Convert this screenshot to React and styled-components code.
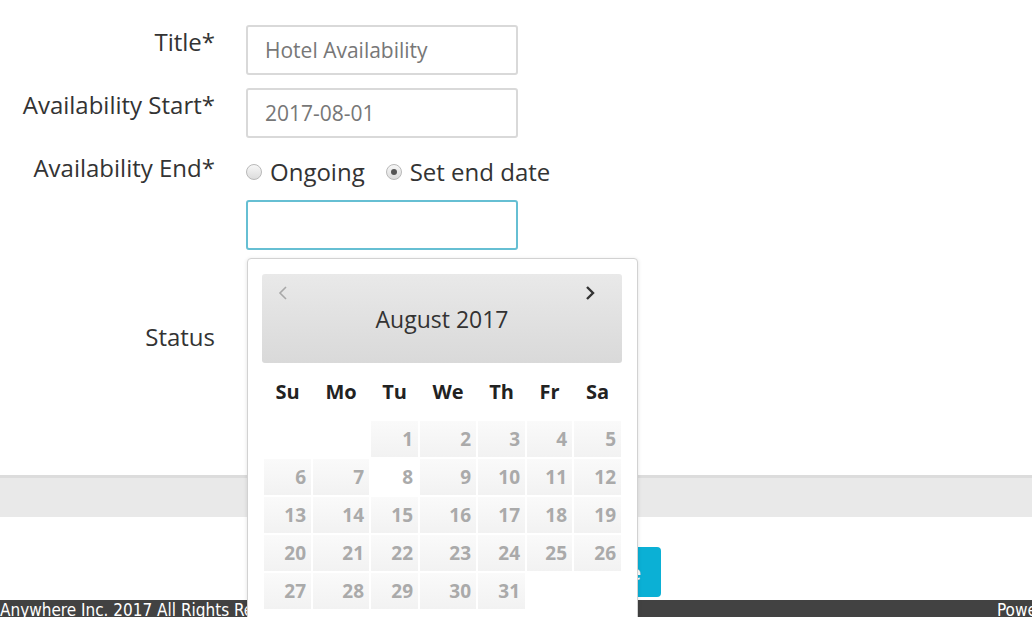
import React from 'react';
import styled, { createGlobalStyle } from 'styled-components';

const GlobalStyle = createGlobalStyle`
  html, body {
    margin: 0;
    padding: 0;
    background: #fff;
    overflow: hidden;
  }
  body {
    font-family: "Open Sans", "DejaVu Sans", sans-serif;
    color: #333;
  }
  * { box-sizing: border-box; }
`;

const Page = styled.div`
  width: 1032px;
  height: 617px;
  display: flex;
  flex-direction: column;
  overflow: hidden;
  & > * { flex-shrink: 0; }
`;

const FormSection = styled.section`
  height: 475px;
  padding-top: 25px;
  display: flex;
  flex-direction: column;
  gap: 13px;
`;

const Row = styled.div`
  display: grid;
  grid-template-columns: 215px 272px;
  column-gap: 31px;
  align-items: start;
  margin-top: ${(p) => p.$push || 0}px;
`;

const Label = styled.label`
  text-align: right;
  font-size: 24px;
  line-height: 34px;
  color: #333;
  white-space: nowrap;
`;

const Field = styled.div`
  display: flex;
  flex-direction: column;
  gap: 13px;
`;

const Anchor = styled.div`
  position: relative;
`;

const TextInput = styled.div`
  height: 50px;
  width: 272px;
  border: 2px solid ${(p) => (p.$focus ? '#66bfd3' : '#d9d9d9')};
  border-radius: 3px;
  padding: 0 17px;
  display: flex;
  align-items: center;
  font-size: 21px;
  color: #777;
  background: #fff;
`;

const RadioGroup = styled.div`
  display: flex;
  align-items: center;
  padding-top: 6px;
  height: 36px;
  white-space: nowrap;
`;

const RadioOption = styled.span`
  display: inline-flex;
  align-items: center;
  gap: 8px;
  font-size: 24px;
  line-height: 30px;
  color: #333;
  margin-right: 21px;
`;

const RadioDot = styled.span`
  width: 16px;
  height: 16px;
  border-radius: 50%;
  border: 1px solid #b9b9b9;
  background: linear-gradient(#f7f7f7, #dcdcdc);
  display: inline-flex;
  align-items: center;
  justify-content: center;
  &::after {
    content: '';
    width: 6px;
    height: 6px;
    border-radius: 50%;
    background: ${(p) => (p.$checked ? '#555' : 'transparent')};
  }
`;

const Placeholder = styled.div`
  height: 50px;
`;

const Picker = styled.div`
  position: absolute;
  top: calc(100% + 8px);
  left: 1px;
  width: 391px;
  height: 420px;
  background: #fff;
  border: 1px solid #d2d2d2;
  border-radius: 4px;
  box-shadow: 0 1px 4px rgba(0, 0, 0, 0.12);
  padding: 15px 15px 15px 14px;
  z-index: 10;
`;

const PickerHead = styled.div`
  height: 89px;
  border-radius: 3px;
  background: linear-gradient(#e9e9e9, #d9d9d9);
  padding-top: 8px;
`;

const NavRow = styled.div`
  display: flex;
  justify-content: space-between;
  align-items: center;
  height: 22px;
  padding: 0 27px 0 16px;
`;

const MonthTitle = styled.div`
  text-align: center;
  font-size: 23px;
  line-height: 30px;
  color: #333;
`;

const DayGrid = styled.div`
  display: grid;
  grid-template-columns: 47px 56px 47px 56px 47px 45px 47px;
  column-gap: 2px;
  row-gap: 2px;
  padding-left: 2px;
`;

const DowRow = styled(DayGrid)`
  margin: 14px 0;
`;

const Dow = styled.div`
  text-align: center;
  font-size: 20px;
  font-weight: 700;
  line-height: 30px;
  color: #222;
`;

const Day = styled.div`
  height: 36px;
  line-height: 36px;
  text-align: right;
  padding-right: 5px;
  font-size: 19px;
  font-weight: 700;
  color: #aaa;
  background: ${(p) =>
    p.$empty ? 'transparent' : p.$plain ? '#fff' : 'linear-gradient(#fafafa, #f2f2f2)'};
`;

const Band = styled.div`
  height: 42px;
  border-top: 3px solid #dcdcdc;
  background: #e9e9e9;
`;

const Actions = styled.div`
  height: 83px;
  padding-top: 30px;
  padding-left: 561px;
`;

const Button = styled.button`
  height: 50px;
  width: 100px;
  border: none;
  border-radius: 4px;
  background: #0bb0d5;
  color: #fff;
  font-family: "Open Sans", sans-serif;
  font-size: 20px;
  font-weight: 600;
  text-align: right;
  padding: 0 20px 0 0;
`;

const Footer = styled.footer`
  height: 40px;
  background: #424242;
  color: #fff;
  display: flex;
  justify-content: space-between;
  font-family: "DejaVu Sans Condensed", "Liberation Sans Narrow", sans-serif;
  font-size: 17px;
  line-height: 20px;
  white-space: nowrap;
`;

const FootRight = styled.span`
  width: 35px;
  overflow: hidden;
`;

const Chevron = ({ dir, color }) => (
  <svg width="10" height="16" viewBox="0 0 10 16">
    <polyline
      points={dir === 'left' ? '8,2 2,8 8,14' : '2,2 8,8 2,14'}
      fill="none"
      stroke={color}
      strokeWidth={dir === 'left' ? 1.6 : 2.4}
    />
  </svg>
);

const days = [
  null, null, 1, 2, 3, 4, 5,
  6, 7, 8, 9, 10, 11, 12,
  13, 14, 15, 16, 17, 18, 19,
  20, 21, 22, 23, 24, 25, 26,
  27, 28, 29, 30, 31,
];

const App = () => (
  <>
    <GlobalStyle />
    <Page>
      <FormSection>
        <Row>
          <Label>Title*</Label>
          <TextInput>Hotel Availability</TextInput>
        </Row>
        <Row>
          <Label>Availability Start*</Label>
          <TextInput>2017-08-01</TextInput>
        </Row>
        <Row>
          <Label>Availability End*</Label>
          <Field>
            <RadioGroup>
              <RadioOption><RadioDot />Ongoing</RadioOption>
              <RadioOption><RadioDot $checked />Set end date</RadioOption>
            </RadioGroup>
            <Anchor>
              <TextInput $focus />
              <Picker>
                <PickerHead>
                  <NavRow>
                    <Chevron dir="left" color="#a8a8a8" />
                    <Chevron dir="right" color="#333" />
                  </NavRow>
                  <MonthTitle>August 2017</MonthTitle>
                </PickerHead>
                <DowRow>
                  {['Su', 'Mo', 'Tu', 'We', 'Th', 'Fr', 'Sa'].map((d) => (
                    <Dow key={d}>{d}</Dow>
                  ))}
                </DowRow>
                <DayGrid>
                  {days.map((d, i) => (
                    <Day key={i} $empty={d === null} $plain={d === 8}>
                      {d}
                    </Day>
                  ))}
                </DayGrid>
              </Picker>
            </Anchor>
          </Field>
        </Row>
        <Row $push={57}>
          <Label>Status</Label>
          <Placeholder />
        </Row>
      </FormSection>
      <Band />
      <Actions>
        <Button>Save</Button>
      </Actions>
      <Footer>
        <span>Anywhere Inc. 2017 All Rights Reserved.</span>
        <FootRight>Powered by Anywhere</FootRight>
      </Footer>
    </Page>
  </>
);

export default App;
